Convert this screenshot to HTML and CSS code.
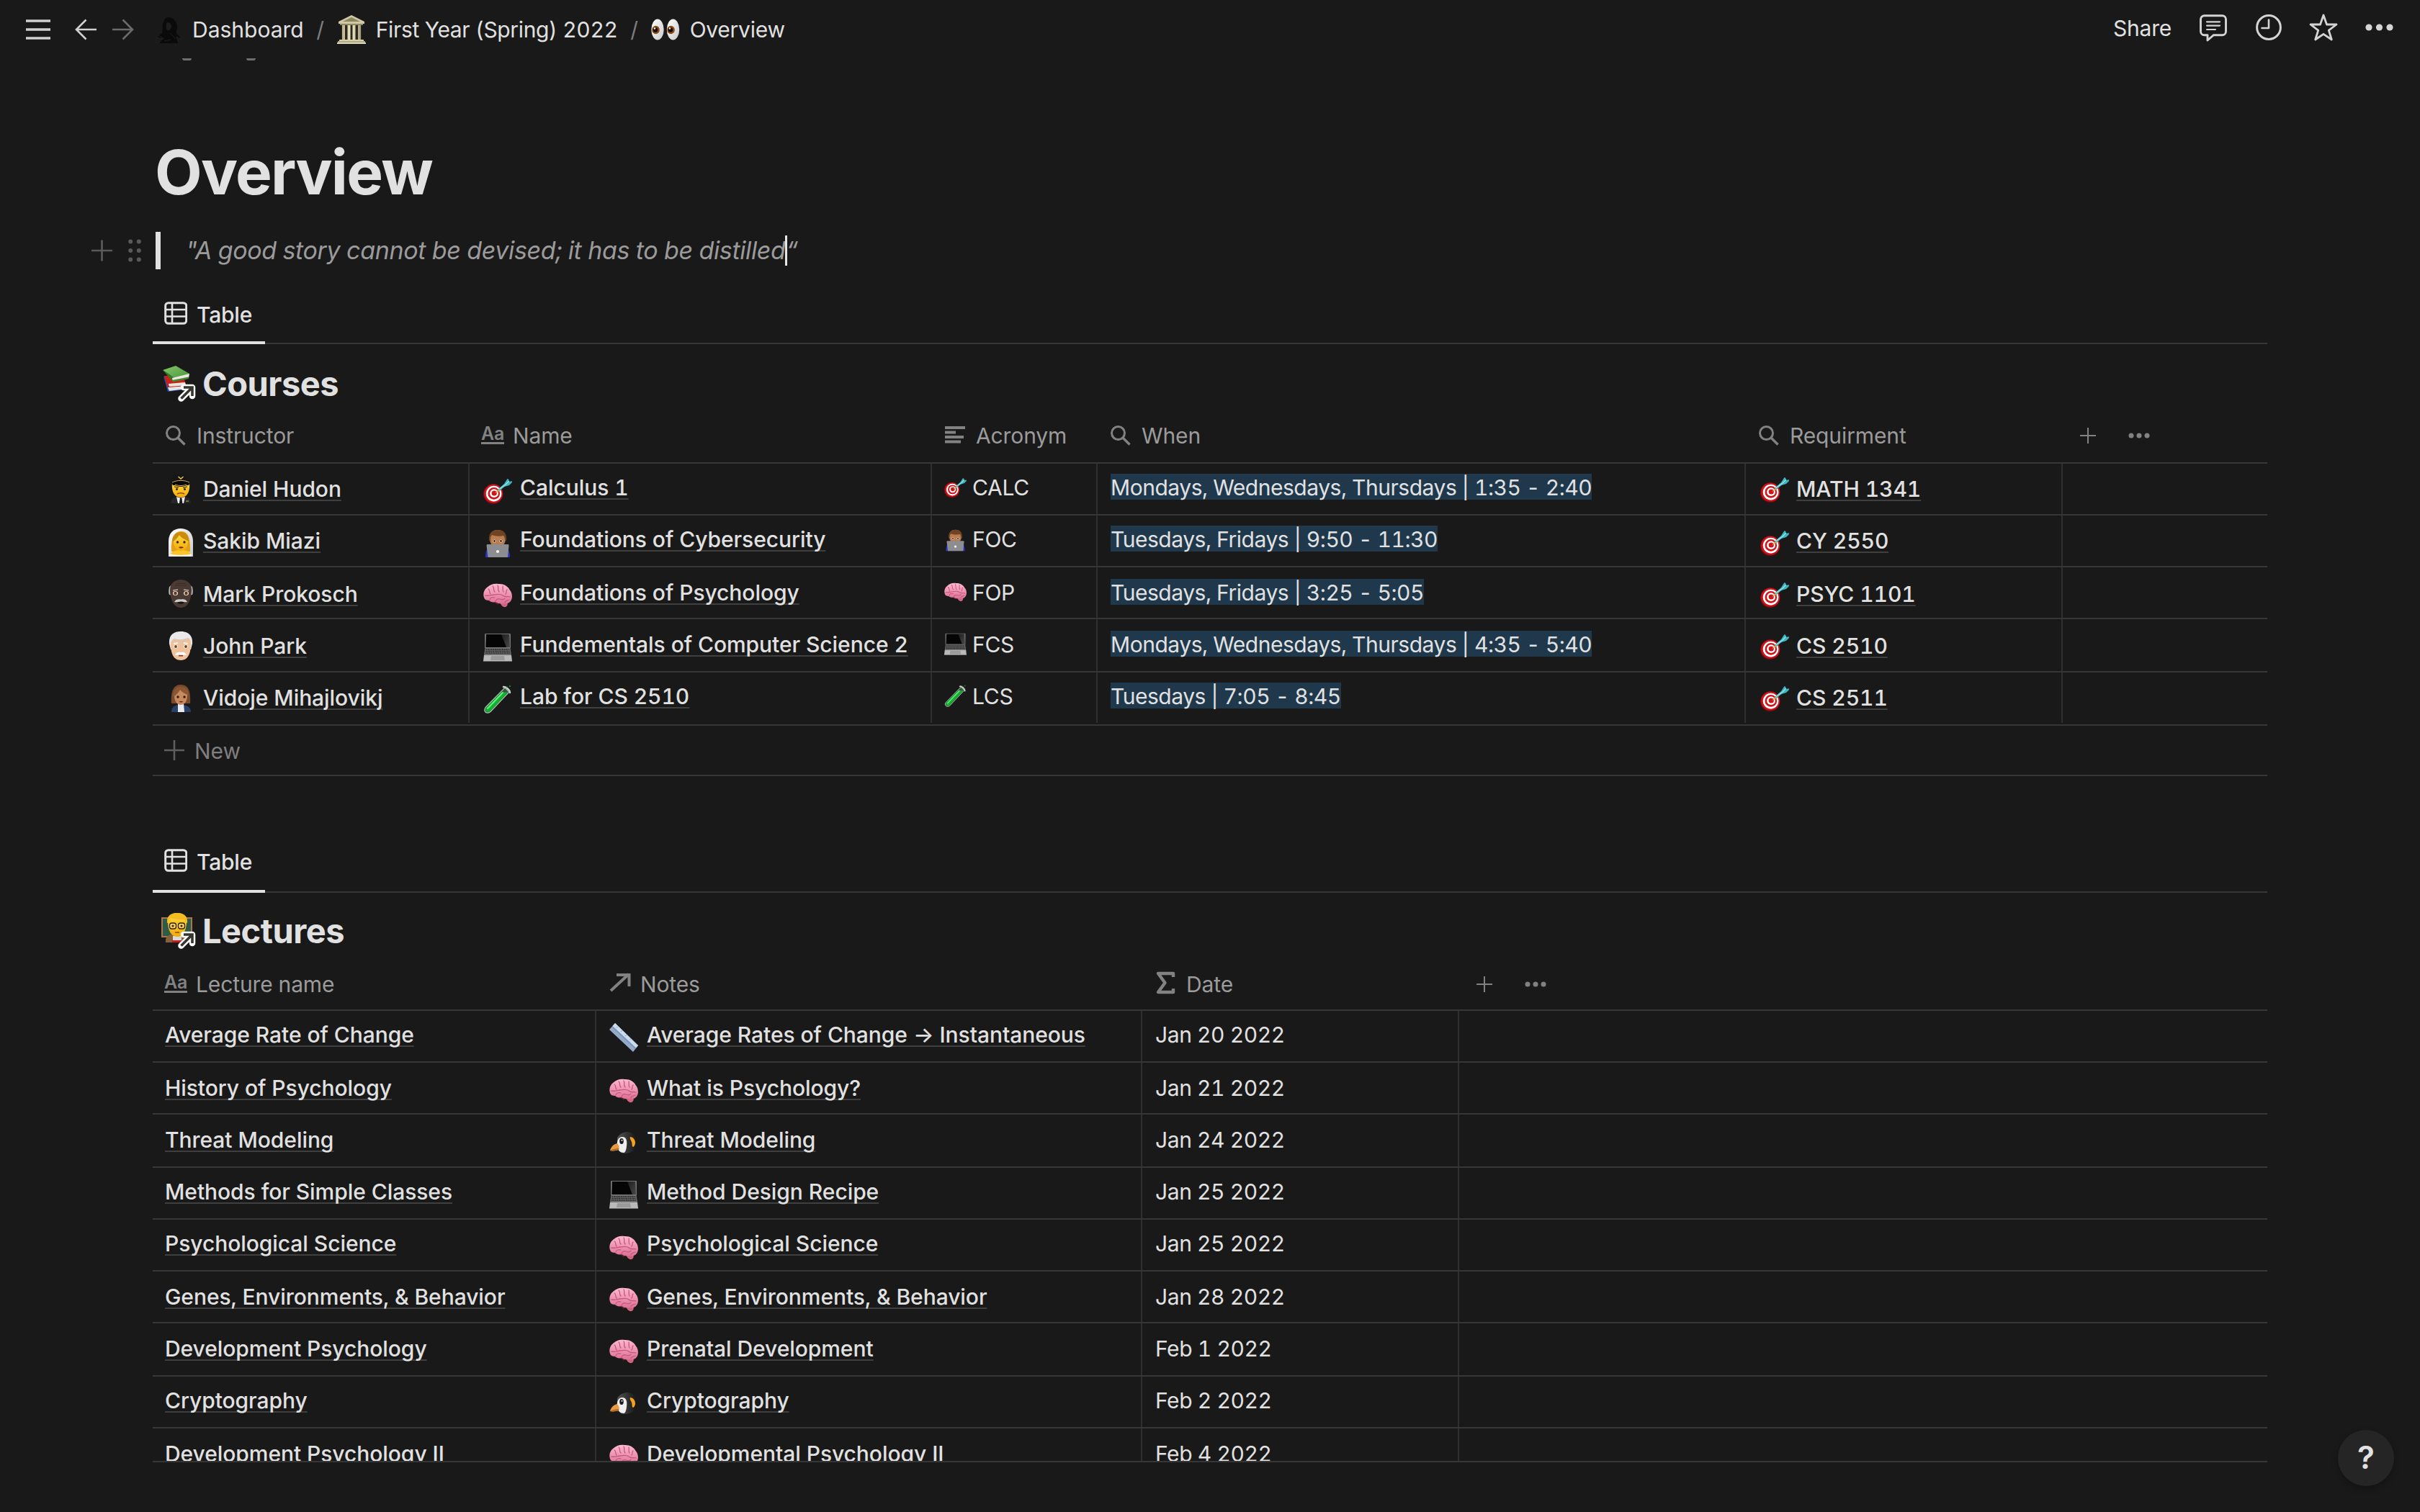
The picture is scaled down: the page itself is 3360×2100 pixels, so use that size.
FILE: index.html
```html
<!DOCTYPE html>
<html lang="en">
<head>
<meta charset="utf-8">
<title>Overview</title>
<link rel="stylesheet" href="styles.css">
</head>
<body>
<svg class="sprite" aria-hidden="true">
  <defs>
    <linearGradient id="g-skin" x1="0" y1="0" x2="0" y2="1"><stop offset="0" stop-color="#ffd93b"/><stop offset="1" stop-color="#f5a90c"/></linearGradient>
    <linearGradient id="g-brain" x1="0" y1="0" x2="0" y2="1"><stop offset="0" stop-color="#ffb9cf"/><stop offset="1" stop-color="#dd7096"/></linearGradient>
    <linearGradient id="g-screen" x1="0" y1="0" x2="1" y2="1"><stop offset="0" stop-color="#2c2c2c"/><stop offset="1" stop-color="#6a6a6a"/></linearGradient>
    <linearGradient id="g-stone" x1="0" y1="0" x2="1" y2="0"><stop offset="0" stop-color="#b8b18b"/><stop offset=".5" stop-color="#f3ecca"/><stop offset="1" stop-color="#a39c78"/></linearGradient>
    <linearGradient id="g-white" x1="0" y1="0" x2="1" y2="1"><stop offset="0" stop-color="#fff"/><stop offset="1" stop-color="#c9c9cd"/></linearGradient>
    <linearGradient id="g-green" x1="0" y1="0" x2="1" y2="1"><stop offset="0" stop-color="#86c96a"/><stop offset="1" stop-color="#459138"/></linearGradient>
    <linearGradient id="g-penguin" x1="0" y1="0" x2="1" y2="0"><stop offset="0" stop-color="#555"/><stop offset=".5" stop-color="#333"/><stop offset="1" stop-color="#161616"/></linearGradient>
  </defs>
  <symbol id="e-target" viewBox="0 0 40 40">
    <circle cx="13.7" cy="25.3" r="13.8" fill="#7d0a10"/>
    <circle cx="14.2" cy="24.6" r="13" fill="#cf141b"/>
    <circle cx="14.6" cy="24.6" r="10.8" fill="#fff"/>
    <circle cx="14.8" cy="24.4" r="8.3" fill="#cf141b"/>
    <circle cx="15" cy="24.2" r="5.9" fill="#fff"/>
    <circle cx="15.2" cy="24" r="3.6" fill="#cf141b"/>
    <path d="M16 24l5.500-6 2 2.200z" fill="#e2b13a"/>
    <path d="M20.500 18.500L29 11l4.500-7 2 1-.5 3.500 4.500-1.500L40 9l-4 4-6.500 2-7.500 6z" fill="#3fb7c2"/>
    <path d="M22 18.500L31 12l5-5" stroke="#9be6ea" stroke-width="1.300" fill="none"/>
  </symbol>
  <symbol id="e-brain" viewBox="0 0 40 40">
    <path d="M23 29c1 4 4 8 8 7 3-1 3.500-5 1.500-8z" fill="#cf6480"/>
    <path d="M14 29l6 4 3-3z" fill="#5d1c2c"/>
    <path d="M2 25C-1 20 0 13 5 9 10 4 16 3 21 4c7-.5 13 3 15.500 8C41 17 41 25 37 29c-3 3-8 3-12 2-3 1-6-.5-8-2-4 1-7 0-9-2-3 0-5-1-6-2z" fill="url(#g-brain)"/>
    <path d="M7 11c3 2 1 5 3 7M13 7c3 2 0 5 3 8M20 6c2 3-1 5 2 9M27 7c1 3-1 5 1 8M33 12c-2 2 0 4-2 6M3 20c6 1 8-1 12-1s8-2 12 1 7 1 10 2M9 26c0-3 4-4 7-3M17 29c0-3 3-5 6-4s6 1 7-1M30 30c0-3 3-3 6-4" fill="none" stroke="#c4587f" stroke-width="1.300" stroke-linecap="round"/>
  </symbol>
  <symbol id="e-laptop" viewBox="0 0 40 40">
    <path d="M3 1h34a1 1 0 0 1 1 1v19H2V2a1 1 0 0 1 1-1z" fill="#747474"/>
    <path d="M4 2h32l.6 18H3.400z" fill="#050505"/>
    <path d="M25 2h11l.6 18H32z" fill="url(#g-screen)" opacity=".65"/>
    <path d="M2.500 21h35L39 31H1z" fill="#6f6f6f"/>
    <path d="M3.500 23h33M3.200 25.500h33.600M2.900 28h34.200" stroke="#222" stroke-width="1.600" stroke-dasharray="1.800 .7"/>
    <path d="M1 31h38l1 8-1 1H1l-1-1z" fill="#b9b9b9"/>
    <path d="M11 32h18l1 6H10z" fill="#9a9a9a"/>
    <path d="M0 39h40l-1 1H1z" fill="#6c6c6c"/>
  </symbol>
  <symbol id="e-tube" viewBox="0 0 40 40">
    <path d="M30 4l6 6L10 37.500c-2.500 2.500-7 2-8-1-.8-2 0-4 2-6z" fill="#3a5544" stroke="#a9c4b4" stroke-width="1.200"/>
    <path d="M25.500 10.500h8.500L9.500 36.500c-2 2-5.500 2-6.500-.5-.5-1.500 0-3 1.500-4.500z" fill="#0fb32b"/>
    <path d="M27 11L6 33" stroke="#62f07a" stroke-width="2" stroke-linecap="round"/>
    <path d="M28 3c3-1 9 4 9 8" stroke="#c9cfcb" stroke-width="2.400" fill="none" stroke-linecap="round"/>
    <circle cx="37" cy="2" r="1.200" fill="#1f7a33"/><circle cx="33" cy="3" r="1" fill="#1f7a33"/>
  </symbol>
  <symbol id="e-ruler" viewBox="0 0 40 40">
    <path d="M8 0L40 31l-7 9L0 9z" fill="#93abc8"/>
    <path d="M8 0L40 31l-3 3.500L4.500 4z" fill="#c9dcec"/>
    <path d="M4.500 4L37 34.500l-1.200 1.500L3.200 5.700z" fill="#7f98b8"/>
    <path d="M12 4.500l-2 2M18 10l-2 2M24 16l-2 2M30 21.500l-2 2" stroke="#8ba1bd" stroke-width="1"/>
  </symbol>
  <symbol id="e-penguin" viewBox="0 0 40 40">
    <path d="M11 13C15 7 20 5 26 5c8 1 12 8 12 15 0 9-7 15-16 15-7 0-11-5-11-11z" fill="url(#g-penguin)"/>
    <path d="M11 25c-1-8 2-13 7-13 6 0 7 6 6 13-.5 5-2 9-4 9-5 0-8-3-9-9z" fill="#efefef"/>
    <path d="M1 31c1-5 5-9 10-10 3 3 3 7 2 9-3 1-8 2-12 1z" fill="#e79a3f"/>
    <path d="M1 31c3-2 9-3 12-3v2c-4 1-8 2-12 1z" fill="#b56a22"/>
    <ellipse cx="17" cy="18" rx="2.800" ry="4" fill="#1b1b1b"/>
    <circle cx="17.500" cy="16.800" r="1" fill="#fff"/>
    <path d="M29 12c4 0 7 4 7 8 0 3-2 6-3 6-2-1-1-4-2-7s-3-4-2-7z" fill="#f6a21b"/>
  </symbol>
  <symbol id="e-pilot" viewBox="0 0 40 40">
    <path d="M6 40c0-5 2-8 8-9h12c6 1 8 4 8 9z" fill="#25262c"/>
    <path d="M14 31l6 2 6-2-2 9h-8z" fill="#f1f1f1"/><path d="M19 33h2.400l1 7h-4.500z" fill="#17181c"/>
    <path d="M8 12c-1 10 2 20 12 20s13-10 12-20z" fill="url(#g-skin)"/>
    <path d="M7 11C6 5 7 0 20 0s14 5 13 11l-2 4H9z" fill="#17171a"/>
    <path d="M8 10c6-3 18-3 24 0l-2 4c-6 4-14 4-20 0z" fill="#08080a"/>
    <path d="M8 11c7-3.500 17-3.500 24 0M12 14c5 2 11 2 16 0" stroke="#d9b13c" stroke-width="1" fill="none"/>
    <path d="M16.500 3l3.500 3 3.500-3" stroke="#f0c64d" stroke-width="1.500" fill="none"/>
    <path d="M11 17l6 1.500M29 17l-6 1.500" stroke="#7a4b00" stroke-width="1.300"/>
    <circle cx="14.500" cy="20.500" r="1.500" fill="#3b2503"/><circle cx="25.500" cy="20.500" r="1.500" fill="#3b2503"/>
    <path d="M15 27c3-1.500 7-1.500 10 0" stroke="#91500a" stroke-width="1.600" fill="none"/>
    <path d="M27 37h4" stroke="#d9b13c" stroke-width="1"/>
  </symbol>
  <symbol id="e-bride" viewBox="0 0 40 40">
    <path d="M3 40V19C3 7 10 1 20 1s17 6 17 18v21z" fill="url(#g-white)"/>
    <path d="M7 33c0-8-1-27 13-28s13 20 13 28z" fill="#e4a115"/>
    <path d="M5 38c3-7 8-5 12-8h6c4 3 9 1 12 8v2H5z" fill="#fbc52a"/>
    <path d="M10 18c0-5 4-8 10-8s10 3 10 8c0 8-4 14-10 14s-10-6-10-14z" fill="url(#g-skin)"/>
    <path d="M8 20c4-3 8-6 10-10 3 5 8 6 13 9 0-9-4-13-11-13S8 11 8 20z" fill="#c98b10"/>
    <circle cx="15.500" cy="20" r="1.700" fill="#3b2503"/><circle cx="25" cy="20" r="1.700" fill="#3b2503"/>
    <path d="M17 27c2-1 5-1 7 0-2 2-5 2-7 0z" fill="#6b3208"/>
    <path d="M5 36v4h30v-4c-6 2.500-24 2.500-30 0z" fill="#f3f1ea"/>
  </symbol>
  <symbol id="e-elder" viewBox="0 0 40 40">
    <path d="M4 10c-1 6-1 8 0 11l4 1V7zM36 10c1 6 1 8 0 11l-4 1V7z" fill="#b9babc"/>
    <path d="M5 14C5 5 12 0 20 0s15 5 15 14-3 25-15 25S5 23 5 14z" fill="#4b3a33"/>
    <path d="M12 8h16M13 5.500h14" stroke="#3a2c26" stroke-width="1"/>
    <path d="M9 15l7-1M31 15l-7-1" stroke="#bdb5ae" stroke-width="1.600"/>
    <ellipse cx="12.500" cy="19" rx="3.500" ry="3" fill="#ede5d8"/><ellipse cx="27.500" cy="19" rx="3.500" ry="3" fill="#ede5d8"/>
    <circle cx="12.500" cy="19" r="2.200" fill="#5b3611"/><circle cx="27.500" cy="19" r="2.200" fill="#5b3611"/>
    <path d="M15 32c3 2.500 7 2.500 10 0v-2H15z" fill="#1d1310"/>
    <path d="M11 31c2-4 6-4 9-3.500 3-.5 7-.5 9 3.500-4 1-6-.5-9-.5s-5 1.500-9 .5z" fill="#cdcdcd"/>
  </symbol>
  <symbol id="e-whitehair" viewBox="0 0 40 40">
    <path d="M4 17C3 5 10 0 20 0s17 5 16 17l-2 8H6z" fill="#e9e9eb"/>
    <path d="M6 17c0-4 3-6 5-7 6 2 14 1 19-1 3 1 4 4 4 8 0 12-3 23-14 23S6 29 6 17z" fill="#efc29b"/>
    <path d="M9 13c6 1 16 1 22-3" stroke="#c9c9cc" stroke-width="1.200" fill="none"/>
    <path d="M10 17l6-1M30 17l-6-1" stroke="#f3f0ec" stroke-width="1.800"/>
    <ellipse cx="13" cy="21" rx="2.800" ry="2.400" fill="#fff"/><ellipse cx="27" cy="21" rx="2.800" ry="2.400" fill="#fff"/>
    <circle cx="13" cy="21" r="1.900" fill="#6b4217"/><circle cx="27" cy="21" r="1.900" fill="#6b4217"/>
    <path d="M17 33h6v1.500h-6z" fill="#8a3b2b"/>
    <path d="M12 32.500c2-4 5-4 8-3.500 3-.5 6-.5 8 3.500-3 1-5-.3-8-.3s-5 1.300-8 .3z" fill="#fff"/>
  </symbol>
  <symbol id="e-woman" viewBox="0 0 40 40">
    <path d="M7 28C6 12 9 2 20 2s14 10 13 26z" fill="#7b4a2b"/>
    <path d="M7 40c0-6 3-9 9-10h8c6 1 10 4 10 10z" fill="#28406a"/>
    <path d="M16 28h8l1 12h-9z" fill="#e9ebee"/>
    <path d="M11 17c0-6 4-9 9-9s9 3 9 9c0 8-4 13-9 13s-9-5-9-13z" fill="#c68a5e"/>
    <path d="M9 19c4-2 8-6 10-10 3 4 7 5 12 8 0-8-4-12-11-12S9 10 9 19z" fill="#8a5735"/>
    <circle cx="16" cy="19" r="1.700" fill="#2c1708"/><circle cx="25" cy="19" r="1.700" fill="#2c1708"/>
    <path d="M17.500 25.500c2-1 4-1 6 0-2 1.500-4 1.500-6 0z" fill="#6b2c1c"/>
  </symbol>
  <symbol id="e-coder" viewBox="0 0 40 40">
    <path d="M3 39c0-8 2-13 7-14h20c5 1 7 6 7 14z" fill="#2a35c8"/>
    <path d="M9 13C9 5 13 1 20 1s11 4 11 12c0 7-4 12-11 12S9 20 9 13z" fill="#b97d50"/>
    <path d="M8 16C7 6 12 1 20 1s13 4 12 15l-2-1c0-3-1-5-2-6-5 1-11 1-16-1-2 2-2 4-2 8z" fill="#704423"/>
    <circle cx="15.500" cy="16.500" r="2" fill="#fff"/><circle cx="24.500" cy="16.500" r="2" fill="#fff"/>
    <circle cx="15.500" cy="16.500" r="1.400" fill="#3a1f0b"/><circle cx="24.500" cy="16.500" r="1.400" fill="#3a1f0b"/>
    <path d="M6 21h28a1.500 1.500 0 0 1 1.500 1.600L34 39H6.500L4.500 22.600A1.500 1.500 0 0 1 6 21z" fill="#8b8d91"/>
    <circle cx="20" cy="31" r="2.100" fill="#f4f4f4"/>
  </symbol>
  <symbol id="e-building" viewBox="0 0 40 40">
    <path d="M20 0l18 9v3H2V9z" fill="#cfc8a3"/><path d="M20 3l12 6H8z" fill="#8d8562"/>
    <path d="M4 12h32v2H4z" fill="#8f8865"/><path d="M6 14h28v20H6z" fill="#2c2820"/>
    <path d="M7 14h4v20H7zM14.500 14h4v20h-4zM21.500 14h4v20h-4zM29 14h4v20h-4z" fill="url(#g-stone)"/>
    <path d="M3 34h34v2H3z" fill="#d8d1ad"/><path d="M1 36h38v2H1z" fill="#b1aa86"/><path d="M0 38h40v2H0z" fill="#ded7b5"/>
  </symbol>
  <symbol id="e-eyes" viewBox="0 0 40 40">
    <ellipse cx="9" cy="20" rx="8.700" ry="14.600" fill="url(#g-white)"/><ellipse cx="30.500" cy="20" rx="8.700" ry="14.600" fill="url(#g-white)"/>
    <ellipse cx="6.500" cy="20.500" rx="5.300" ry="5.800" fill="#8a4b12"/><ellipse cx="27.500" cy="20.500" rx="5.300" ry="5.800" fill="#8a4b12"/>
    <circle cx="6" cy="20.500" r="3.200" fill="#160a02"/><circle cx="27" cy="20.500" r="3.200" fill="#160a02"/>
    <circle cx="5" cy="18.500" r="1.200" fill="#fff"/><circle cx="26" cy="18.500" r="1.200" fill="#fff"/>
  </symbol>
  <symbol id="e-hooded" viewBox="0 0 36 36">
    <path d="M18 0c6 0 12 6 12 13 0 5-2 7-1 10 5 3 6 8 6 13H1c0-5 2-11 8-14 2-5-1-9 2-15 1-4 3-7 7-7z" fill="#0a0a0a"/>
    <path d="M16 7c4 0 6 3 6 6s-3 6-6 5c-2-3-2-8 0-11z" fill="#1d1d1d"/>
    <path d="M1 28l9 2-6 6H1zM29 27l7 4v5h-4zM5 26l7 4M20 22l8 8M12 33l9-2" fill="#191919" stroke="#202020" stroke-width="1"/>
  </symbol>
  <symbol id="e-books" viewBox="0 0 44 44">
    <path d="M3 18l6 21 26-3-4-14z" fill="#2c4da6"/><path d="M9 33l24-2.500 1 4.500-23 3z" fill="#e3e3e3"/>
    <path d="M4 17l5 16 26-2-5-15z" fill="#c92018"/><path d="M10 28l23-2 1 4-23 2z" fill="#e9e4e0"/>
    <path d="M2 9L20 3l19 11-18 8z" fill="url(#g-green)"/>
    <path d="M2 9l12 14 3 1 4-2z" fill="#2f7a29"/><path d="M15 20l24-6-1 6-22 5z" fill="#ece9df"/><path d="M15 23l23-4.500V21l-22 4.500z" fill="#3c8a33"/>
  </symbol>
  <symbol id="e-teacher" viewBox="0 0 44 44">
    <path d="M0 9h43v28H0z" fill="#a9764e"/><path d="M2 11h39v24H2z" fill="#2d5b48"/>
    <path d="M6 46V40c1-5 5-7 11-8h10c6 1 10 3 11 8v6z" fill="#85603a"/>
    <path d="M16 35h12v11H16z" fill="#d9d9d9"/><path d="M15 41h14v5H15z" fill="#c01f22"/>
    <path d="M9 15C9 7 14 3 22 3s13 4 13 12c0 11-4 21-13 21S9 26 9 15z" fill="url(#g-skin)"/>
    <path d="M8 17C7 7 13 3 22 3s15 4 14 14l-2-1c-1-3-2-4-4-4-6 0-11 0-17-2-3 2-3 4-3 6z" fill="#f1bd21"/>
    <rect x="11.500" y="17" width="9" height="8" rx="3" fill="#f7d25c" stroke="#2c2208" stroke-width="1.300"/><rect x="23.500" y="17" width="9" height="8" rx="3" fill="#f7d25c" stroke="#2c2208" stroke-width="1.300"/>
    <circle cx="16" cy="21" r="1.500" fill="#2c2208"/><circle cx="28" cy="21" r="1.500" fill="#2c2208"/>
    <path d="M19 30h6" stroke="#7a4b00" stroke-width="1.400"/>
  </symbol>
  <symbol id="i-badge" viewBox="0 0 25 25">
    <g fill="none" stroke-linejoin="round" stroke-linecap="round">
      <path d="M4.500 20.500L19 6M8 5h12v12" stroke="#fff" stroke-width="8.500"/>
      <path d="M4.500 20.500L19 6M8 5h12v12" stroke="#37352f" stroke-width="3.600" stroke-linecap="butt" stroke-linejoin="miter"/>
    </g>
  </symbol>
  <symbol id="i-table" viewBox="0 0 32 32">
    <rect x="1.700" y="1.700" width="29" height="28.600" rx="4" fill="none" stroke="currentColor" stroke-width="3"/>
    <path d="M2 11h28M2 20.500h28M11 2v28" stroke="currentColor" stroke-width="2.600"/>
  </symbol>
  <symbol id="i-search" viewBox="0 0 32 36">
    <circle cx="10.500" cy="14.500" r="9" fill="none" stroke="currentColor" stroke-width="3"/><path d="M17 21l9.500 9.500" stroke="currentColor" stroke-width="3.400"/>
  </symbol>
  <symbol id="i-lines" viewBox="0 0 32 36">
    <path d="M0 7h28M0 13.500h15M0 20h26M0 26.500h22" stroke="currentColor" stroke-width="3.800"/>
  </symbol>
  <symbol id="i-arrow" viewBox="0 0 32 36">
    <path d="M2 27L27 4M10 5h17.500v16" fill="none" stroke="currentColor" stroke-width="4"/>
  </symbol>
  <symbol id="i-sigma" viewBox="0 0 32 36">
    <path d="M25 8V3H4l9.500 13L4 29h21v-5" fill="none" stroke="currentColor" stroke-width="4.400" stroke-linejoin="round"/>
  </symbol>
  <symbol id="i-plus" viewBox="0 0 28 28"><path d="M0 14h28M14 0v28" stroke="currentColor" stroke-width="2.600"/></symbol>
  <symbol id="i-dots" viewBox="0 0 30 10"><circle cx="4" cy="5" r="3.500" fill="currentColor"/><circle cx="15" cy="5" r="3.500" fill="currentColor"/><circle cx="26" cy="5" r="3.500" fill="currentColor"/></symbol>
</svg>

<div class="app">
  <header class="topbar">
    <nav class="crumbs">
      <svg class="menu" viewBox="0 0 34 28"><path d="M0 2h34M0 14h34M0 26h34" stroke="#d0d0d0" stroke-width="3.500"/></svg>
      <svg class="nav-back" viewBox="0 0 30 30"><path d="M30 15H2M15.500 1.500L2 15l13.500 13.500" fill="none" stroke="#d0d0d0" stroke-width="2.600"/></svg>
      <svg class="nav-forward" viewBox="0 0 30 30"><path d="M0 15h28M14.500 1.500L28 15 14.500 28.500" fill="none" stroke="#6b6b6b" stroke-width="2.600"/></svg>
      <svg class="crumb-avatar"><use href="#e-hooded"/></svg>
      <span class="crumb crumb-home">Dashboard</span>
      <span class="slash">/</span>
      <svg class="emoji crumb-emoji"><use href="#e-building"/></svg>
      <span class="crumb crumb-term">First Year (Spring) 2022</span>
      <span class="slash">/</span>
      <svg class="emoji crumb-emoji"><use href="#e-eyes"/></svg>
      <span class="crumb crumb-page">Overview</span>
    </nav>
    <div class="actions">
      <span class="share">Share</span>
      <svg class="act-comment" viewBox="0 0 38 38"><path d="M6.500 1.700h25a5 5 0 0 1 5 5v17a5 5 0 0 1-5 5H19.500L11 36v-7.300H6.500a5 5 0 0 1-5-5v-17a5 5 0 0 1 5-5z" fill="none" stroke="#d4d4d4" stroke-width="2.900" stroke-linejoin="round"/><path d="M10 10.300h18M10 15.600h18M10 21h12" stroke="#d4d4d4" stroke-width="2.200" stroke-linecap="round"/></svg>
      <svg class="act-clock" viewBox="0 0 36 36"><circle cx="18" cy="18" r="16.400" fill="none" stroke="#d4d4d4" stroke-width="3"/><path d="M18 7.500V19H8.500" fill="none" stroke="#d4d4d4" stroke-width="2.600" stroke-linecap="round" stroke-linejoin="round"/></svg>
      <svg class="act-star" viewBox="0 0 40 38"><path d="M20 2l4.500 13H38L27.300 23.200 31.300 36 20 28.300 8.700 36l4-12.800L2 15h13.500z" fill="none" stroke="#d4d4d4" stroke-width="2.800" stroke-linejoin="round"/></svg>
      <svg class="act-more" viewBox="0 0 40 10"><circle cx="5" cy="5" r="4.600" fill="#d4d4d4"/><circle cx="19.500" cy="5" r="4.600" fill="#d4d4d4"/><circle cx="34" cy="5" r="4.600" fill="#d4d4d4"/></svg>
    </div>
  </header>
  <div class="scrolled-edge"><i></i><i></i></div>

  <main>
    <h1>Overview</h1>
    <div class="quote-line">
      <svg class="add-block"><use href="#i-plus"/></svg>
      <svg class="grip" viewBox="0 0 18 32"><g fill="#5a5a5a"><circle cx="3.200" cy="3.500" r="3"/><circle cx="14.800" cy="3.500" r="3"/><circle cx="3.200" cy="16" r="3"/><circle cx="14.800" cy="16" r="3"/><circle cx="3.200" cy="28.500" r="3"/><circle cx="14.800" cy="28.500" r="3"/></g></svg>
      <blockquote><span class="quote-text">"A good story cannot be devised; it has to be distilled</span><span class="caret"></span><span>“</span></blockquote>
    </div>

    <section class="database courses">
      <div class="tabs"><div class="tab"><svg><use href="#i-table"/></svg><span>Table</span></div></div>
      <h2><span class="page-icon"><svg class="picture"><use href="#e-books"/></svg><svg class="badge"><use href="#i-badge"/></svg></span><span class="db-name">Courses</span></h2>
      <div class="head">
        <div class="prop"><svg><use href="#i-search"/></svg><span>Instructor</span></div>
        <div class="prop prop-title"><b>Aa</b><span>Name</span></div>
        <div class="prop"><svg><use href="#i-lines"/></svg><span>Acronym</span></div>
        <div class="prop"><svg><use href="#i-search"/></svg><span>When</span></div>
        <div class="prop"><svg><use href="#i-search"/></svg><span>Requirment</span></div>
        <div class="tools"><svg class="plus"><use href="#i-plus"/></svg><svg class="dots"><use href="#i-dots"/></svg></div>
      </div>
      <div class="row">
        <div class="cell who"><svg class="emoji"><use href="#e-pilot"/></svg><a>Daniel Hudon</a></div>
        <div class="cell name"><svg class="emoji"><use href="#e-target"/></svg><a>Calculus 1</a></div>
        <div class="cell acronym"><svg class="emoji"><use href="#e-target"/></svg><span>CALC</span></div>
        <div class="cell when"><mark>Mondays, Wednesdays, Thursdays | 1:35 - 2:40</mark></div>
        <div class="cell req"><svg class="emoji"><use href="#e-target"/></svg><a>MATH 1341</a></div>
      </div>
      <div class="row icon-low">
        <div class="cell who"><svg class="emoji"><use href="#e-bride"/></svg><a>Sakib Miazi</a></div>
        <div class="cell name"><svg class="emoji"><use href="#e-coder"/></svg><a>Foundations of Cybersecurity</a></div>
        <div class="cell acronym"><svg class="emoji"><use href="#e-coder"/></svg><span>FOC</span></div>
        <div class="cell when"><mark>Tuesdays, Fridays | 9:50 - 11:30</mark></div>
        <div class="cell req"><svg class="emoji"><use href="#e-target"/></svg><a>CY 2550</a></div>
      </div>
      <div class="row icon-low text-low">
        <div class="cell who"><svg class="emoji"><use href="#e-elder"/></svg><a>Mark Prokosch</a></div>
        <div class="cell name"><svg class="emoji"><use href="#e-brain"/></svg><a>Foundations of Psychology</a></div>
        <div class="cell acronym"><svg class="emoji"><use href="#e-brain"/></svg><span>FOP</span></div>
        <div class="cell when"><mark>Tuesdays, Fridays | 3:25 - 5:05</mark></div>
        <div class="cell req"><svg class="emoji"><use href="#e-target"/></svg><a>PSYC 1101</a></div>
      </div>
      <div class="row tall icon-low text-low">
        <div class="cell who"><svg class="emoji"><use href="#e-whitehair"/></svg><a>John Park</a></div>
        <div class="cell name"><svg class="emoji"><use href="#e-laptop"/></svg><a>Fundementals of Computer Science 2</a></div>
        <div class="cell acronym"><svg class="emoji"><use href="#e-laptop"/></svg><span>FCS</span></div>
        <div class="cell when"><mark>Mondays, Wednesdays, Thursdays | 4:35 - 5:40</mark></div>
        <div class="cell req"><svg class="emoji"><use href="#e-target"/></svg><a>CS 2510</a></div>
      </div>
      <div class="row tall last">
        <div class="cell who"><svg class="emoji"><use href="#e-woman"/></svg><a>Vidoje Mihajlovikj</a></div>
        <div class="cell name"><svg class="emoji"><use href="#e-tube"/></svg><a>Lab for CS 2510</a></div>
        <div class="cell acronym"><svg class="emoji"><use href="#e-tube"/></svg><span>LCS</span></div>
        <div class="cell when"><mark>Tuesdays | 7:05 - 8:45</mark></div>
        <div class="cell req"><svg class="emoji"><use href="#e-target"/></svg><a>CS 2511</a></div>
      </div>
      <div class="new-row"><svg><use href="#i-plus"/></svg><span>New</span></div>
    </section>

    <section class="database lectures">
      <div class="tabs"><div class="tab"><svg><use href="#i-table"/></svg><span>Table</span></div></div>
      <h2><span class="page-icon"><svg class="picture"><use href="#e-teacher"/></svg><svg class="badge"><use href="#i-badge"/></svg></span><span class="db-name">Lectures</span></h2>
      <div class="head">
        <div class="prop prop-title"><b>Aa</b><span>Lecture name</span></div>
        <div class="prop"><svg><use href="#i-arrow"/></svg><span>Notes</span></div>
        <div class="prop"><svg><use href="#i-sigma"/></svg><span>Date</span></div>
        <div class="tools"><svg class="plus"><use href="#i-plus"/></svg><svg class="dots"><use href="#i-dots"/></svg></div>
      </div>
      <div class="row">
        <div class="cell title"><a>Average Rate of Change</a></div>
        <div class="cell note"><svg class="emoji"><use href="#e-ruler"/></svg><a>Average Rates of Change → Instantaneous</a></div>
        <div class="cell date"><span>Jan 20 2022</span></div>
      </div>
      <div class="row icon-low text-low">
        <div class="cell title"><a>History of Psychology</a></div>
        <div class="cell note"><svg class="emoji"><use href="#e-brain"/></svg><a>What is Psychology?</a></div>
        <div class="cell date"><span>Jan 21 2022</span></div>
      </div>
      <div class="row tall icon-low text-low">
        <div class="cell title"><a>Threat Modeling</a></div>
        <div class="cell note"><svg class="emoji"><use href="#e-penguin"/></svg><a>Threat Modeling</a></div>
        <div class="cell date"><span>Jan 24 2022</span></div>
      </div>
      <div class="row">
        <div class="cell title"><a>Methods for Simple Classes</a></div>
        <div class="cell note"><svg class="emoji"><use href="#e-laptop"/></svg><a>Method Design Recipe</a></div>
        <div class="cell date"><span>Jan 25 2022</span></div>
      </div>
      <div class="row icon-low">
        <div class="cell title"><a>Psychological Science</a></div>
        <div class="cell note"><svg class="emoji"><use href="#e-brain"/></svg><a>Psychological Science</a></div>
        <div class="cell date"><span>Jan 25 2022</span></div>
      </div>
      <div class="row icon-low text-low">
        <div class="cell title"><a>Genes, Environments, &amp; Behavior</a></div>
        <div class="cell note"><svg class="emoji"><use href="#e-brain"/></svg><a>Genes, Environments, &amp; Behavior</a></div>
        <div class="cell date"><span>Jan 28 2022</span></div>
      </div>
      <div class="row tall icon-low text-low">
        <div class="cell title"><a>Development Psychology</a></div>
        <div class="cell note"><svg class="emoji"><use href="#e-brain"/></svg><a>Prenatal Development</a></div>
        <div class="cell date"><span>Feb 1 2022</span></div>
      </div>
      <div class="row">
        <div class="cell title"><a>Cryptography</a></div>
        <div class="cell note"><svg class="emoji"><use href="#e-penguin"/></svg><a>Cryptography</a></div>
        <div class="cell date"><span>Feb 2 2022</span></div>
      </div>
      <div class="row cut icon-low text-low">
        <div class="cell title"><a>Development Psychology II</a></div>
        <div class="cell note"><svg class="emoji"><use href="#e-brain"/></svg><a>Developmental Psychology II</a></div>
        <div class="cell date"><span>Feb 4 2022</span></div>
      </div>
    </section>
  </main>
  <div class="help">?</div>
</div>
</body>
</html>
```
FILE: styles.css
```css
* { box-sizing: border-box; }
body { margin: 0; background: #191919; color: #e1e1e1; font-family: Inter, "Liberation Sans", sans-serif; font-size: 30px; line-height: 36px; font-variant-numeric: tabular-nums; }
svg { display: block; flex: none; overflow: visible; }
.sprite { position: absolute; width: 0; height: 0; }
.app { width: 3360px; height: 2100px; overflow: hidden; display: flex; flex-direction: column; white-space: nowrap; }

.topbar { height: 81px; flex: none; display: flex; justify-content: space-between; }
.crumbs { display: flex; align-items: flex-start; padding-left: 36px; }
.menu { width: 34px; height: 28px; margin-top: 27px; }
.nav-back { width: 30px; height: 30px; margin: 26px 0 0 34px; }
.nav-forward { width: 30px; height: 30px; margin: 26px 0 0 22px; }
.crumb-avatar { width: 36px; height: 36px; margin: 24px 15px 0 30px; }
.crumb, .slash { margin-top: 23px; }
.crumb-term { letter-spacing: -.340px; }
.crumb-page { letter-spacing: -.260px; }
.slash { width: 46px; text-align: center; color: #7d7d7d; }
.crumb-emoji { margin: 21px 14px 0 0; }
.emoji { width: 40px; height: 40px; }
.actions { display: flex; align-items: flex-start; padding-right: 36px; }
.share { margin-top: 21px; letter-spacing: -.220px; }
.act-comment { width: 38px; height: 38px; margin: 20px 0 0 39px; }
.act-clock { width: 36px; height: 36px; margin: 20px 0 0 40px; }
.act-star { width: 40px; height: 38px; margin: 19px 0 0 38px; }
.act-more { width: 40px; height: 10px; margin: 33px 0 0 38px; }

.scrolled-edge { height: 3px; flex: none; display: flex; gap: 76px; padding-left: 253px; }
.scrolled-edge i { width: 13px; height: 3px; background: #6f6f6f; border-radius: 0 0 7px 7px; }

h1 { margin: 103px 0 0 215px; font-size: 85.300px; line-height: 104px; font-weight: 700; letter-spacing: -1.700px; }
.quote-line { display: flex; align-items: center; height: 52px; margin-top: 31px; padding-left: 127px; color: #5a5a5a; }
.add-block { width: 29px; height: 30px; }
.grip { width: 18px; height: 32px; margin: 0 20px 0 22px; }
blockquote { display: flex; align-items: center; margin: 0; height: 52px; padding-left: 35px; border-left: 7px solid #e1e1e1; font-size: 34px; line-height: 52px; font-style: italic; letter-spacing: -.360px; color: #9b9b9b; }
.caret { width: 3px; height: 42px; margin: 0 -1px 0 -1px; background: #e6e6e6; }

.database { width: 2936px; margin-left: 212px; }
.courses { margin-top: 28px; }
.tabs { height: 76px; display: flex; border-bottom: 2px solid #373737; }
.tab { width: 156px; height: 76px; display: flex; gap: 13px; padding: 17px 0 0 16px; border-bottom: 4px solid #e1e1e1; font-weight: 500; letter-spacing: -.200px; }
.tab svg { width: 32px; height: 32px; }
h2 { display: flex; align-items: flex-start; gap: 13px; height: 56px; margin: 27px 0 0 12px; font-size: 47px; line-height: 56px; font-weight: 700; letter-spacing: -.500px; }
.page-icon { position: relative; width: 44px; height: 44px; }
.picture { width: 44px; height: 44px; }
.badge { position: absolute; left: 23px; top: 28px; width: 25px; height: 25px; }
.head, .row { display: grid; }
.courses .head, .courses .row { grid-template-columns: 440px 642px 230px 900px 440px 1fr; }
.lectures .head, .lectures .row { grid-template-columns: 616px 758px 440px 1fr; }
.head { height: 83px; padding-top: 26px; border-bottom: 2px solid #373737; color: #9b9b9b; }
.prop { display: flex; gap: 11px; padding-left: 18px; letter-spacing: -.120px; }
.prop svg { width: 32px; height: 36px; color: #828282; }
.prop b { width: 32px; height: 30px; border-bottom: 3px solid #828282; color: #828282; font-size: 25px; line-height: 30px; font-weight: 600; }
.prop-title { padding-left: 16px; gap: 12px; }
.tools { display: flex; align-items: flex-start; color: #828282; }
.plus { width: 22px; height: 24px; margin: 6px 0 0 24px; }
.dots { width: 30px; height: 10px; margin: 13px 0 0 45px; }

.row { --text: 15px; --icon: 17px; height: 72px; border-bottom: 2px solid #373737; }
.row.tall { height: 74px; }
.row.text-low { --text: 17px; }
.row.icon-low { --icon: 19px; }
.cell { display: flex; align-items: flex-start; border-right: 2px solid #2f2f2f; padding-left: 18px; overflow: hidden; }
.row.last .cell { margin-bottom: 2px; }
.cell > * { margin-top: var(--text); }
.cell .emoji { margin-top: var(--icon); }
.cell a { font-weight: 500; letter-spacing: -.060px; text-decoration: underline #3f3f3f 2px; text-underline-offset: 4px; text-decoration-skip-ink: none; }
.who, .name, .req { gap: 11px; padding-left: 19px; }
.who a, .req a { padding-top: 2px; }
.who .emoji, .req .emoji { margin-top: calc(var(--icon) - 2px); }
.req { gap: 10px; padding-left: 20px; }
.acronym { gap: 8px; padding-left: 17px; letter-spacing: -.300px; }
.acronym .emoji { width: 31px; height: 31px; }
.when mark { height: 36px; margin-top: calc(var(--text) - 1px); line-height: 38px; letter-spacing: -.470px; background: #1f384b; color: inherit; }
.title { padding-left: 17px; }
.note { gap: 12px; }
.date { letter-spacing: -.420px; }
.new-row { display: flex; gap: 14px; height: 70px; padding: 17px 0 0 16px; border-bottom: 2px solid #373737; color: #7f7f7f; }
.new-row svg { width: 28px; height: 28px; margin-top: 3px; color: #5f5f5f; }

.lectures { margin-top: 84px; }
.lectures .tabs, .lectures .tab { height: 78px; }
.lectures h2 { margin-top: 25px; }
.lectures .head { padding-top: 28px; }
.lectures .row.cut { height: 47px; overflow: hidden; }

.help { position: absolute; left: 3246px; top: 1986px; width: 78px; height: 78px; border-radius: 50%; background: #252525; box-shadow: 0 4px 10px rgba(0, 0, 0, .25); text-align: center; font-size: 44px; line-height: 76px; font-weight: 600; }
```
